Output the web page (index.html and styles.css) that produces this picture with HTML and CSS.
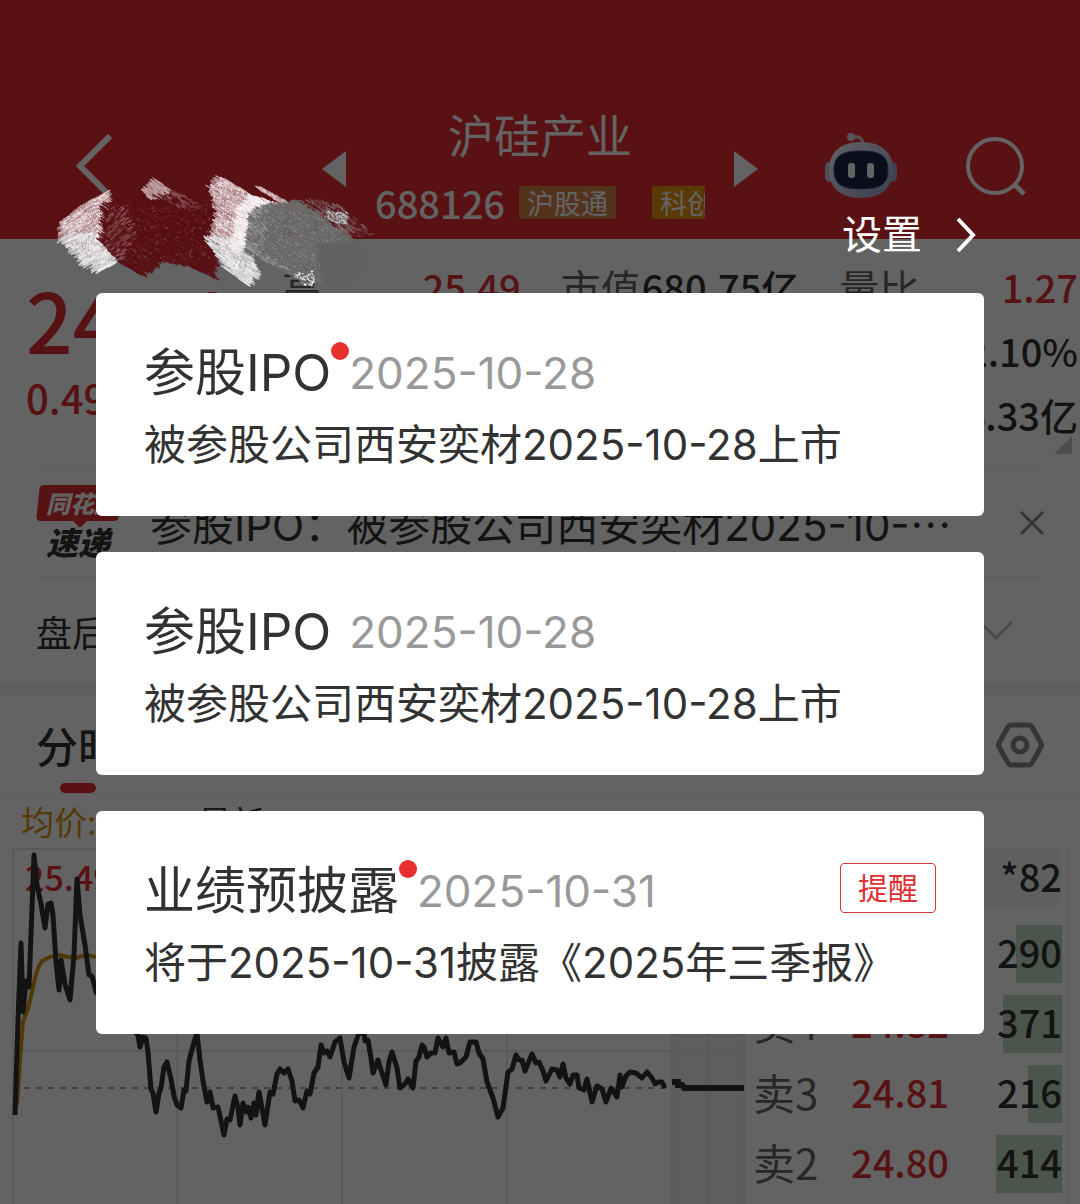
FILE: index.html
```html
<!DOCTYPE html>
<html lang="zh-CN">
<head>
    <meta charset="UTF-8">
    <meta name="viewport" content="width=device-width, initial-scale=1.0">
    <title>沪硅产业 688126</title>
    <link rel="stylesheet" href="styles.css">
</head>
<body>
    <div class="app">
        <header class="header">
            <div class="header-left">
                <button class="icon-btn" aria-label="返回">
                    <svg width="36" height="64" viewBox="0 0 36 64" fill="none" stroke="#fff" stroke-width="6"><path d="M34 2 4 32l30 30"/></svg>
                </button>
            </div>
            <div class="switcher">
                <button class="icon-btn" aria-label="上一只">
                    <svg width="24" height="36" viewBox="0 0 24 36"><path d="M24 0v36L0 18z" fill="#fff"/></svg>
                </button>
                <div class="stock">
                    <h1 class="stock-name">沪硅产业</h1>
                    <div class="stock-info">
                        <span class="stock-code">688126</span>
                        <span class="tag">沪股通</span>
                        <span class="tag tag-gold">科创板</span>
                    </div>
                </div>
                <button class="icon-btn" aria-label="下一只">
                    <svg width="24" height="36" viewBox="0 0 24 36"><path d="M0 0v36l24-18z" fill="#fff"/></svg>
                </button>
            </div>
            <div class="header-right">
                <button class="icon-btn" aria-label="智能助手">
                    <svg width="72" height="68" viewBox="0 0 72 68">
                        <defs>
                            <linearGradient id="head" x1="0" y1="0" x2="1" y2="1">
                                <stop offset="0" stop-color="#ffffff"/>
                                <stop offset="1" stop-color="#9a9fd0"/>
                            </linearGradient>
                        </defs>
                        <path d="M27 5c7-1 11 1 11 8" fill="none" stroke="#d8d4ea" stroke-width="3"/>
                        <circle cx="26" cy="5" r="4" fill="#d8d4ea"/>
                        <rect x="0" y="30" width="10" height="20" rx="5" fill="#c4c6e2"/>
                        <rect x="62" y="30" width="10" height="20" rx="5" fill="#a4a8d4"/>
                        <path d="M36 10c22 0 32 12 32 27 0 17-9 29-32 29S4 54 4 37c0-15 10-27 32-27z" fill="url(#head)"/>
                        <path d="M36 19c18 0 27 4 27 19s-9 19-27 19S9 53 9 38s9-19 27-19z" fill="#1b2445" stroke="#4a4c9c" stroke-width="1"/>
                        <rect x="23" y="31" width="7" height="15" rx="3" fill="#fff"/>
                        <rect x="42" y="31" width="7" height="15" rx="3" fill="#fff"/>
                    </svg>
                </button>
                <button class="icon-btn" aria-label="搜索">
                    <svg width="60" height="60" viewBox="0 0 60 60" fill="none" stroke="#fff" stroke-width="4"><circle cx="29" cy="30" r="27"/><path d="m48 48 10 10" stroke-width="5"/></svg>
                </button>
            </div>
        </header>

        <section class="quote">
            <div class="price">
                <div class="price-now">24.79</div>
                <div class="price-diff">0.49</div>
            </div>
            <div class="quote-col">
                <div class="quote-item"><span class="label">高</span><span class="num up">25.49</span></div>
            </div>
            <div class="quote-col">
                <div class="quote-item"><span class="label">市值</span><span class="num">680.75亿</span></div>
            </div>
            <div class="quote-col">
                <div class="quote-item"><span class="label">量比</span><span class="num up">1.27</span></div>
                <div class="quote-item"><span class="label">换手</span><span class="num">2.10%</span></div>
                <div class="quote-item"><span class="label">金额</span><span class="num">14.33亿</span></div>
            </div>
            <i class="corner"></i>
        </section>

        <section class="news">
            <div class="news-logo">
                <span class="logo-top">同花顺</span>
                <span class="logo-bottom">速递</span>
            </div>
            <p class="news-text">参股IPO：被参股公司西安奕材2025-10-<span class="dots">…</span></p>
            <button class="icon-btn" aria-label="关闭">
                <svg width="24" height="24" viewBox="0 0 24 24" stroke="#888" stroke-width="3"><path d="m1 1 22 22M23 1 1 23"/></svg>
            </button>
        </section>

        <section class="after">
            <span>盘后</span>
            <svg width="36" height="20" viewBox="0 0 36 20" fill="none" stroke="#bbb" stroke-width="3"><path d="m2 1 16 16L34 1"/></svg>
        </section>

        <nav class="tabs">
            <a class="tab active" href="#fenshi">分时</a>
            <button class="icon-btn" aria-label="图表设置">
                <svg width="48" height="46" viewBox="0 0 48 46" fill="none" stroke="#888" stroke-width="5"><path d="M15 3h18q2 0 3 2l9 16q1 2 0 4l-9 16q-1 2-3 2H15q-2 0-3-2L3 25q-1-2 0-4l9-16q1-2 3-2z"/><circle cx="24" cy="23" r="7"/></svg>
            </button>
        </nav>

        <div class="legend">
            <span class="legend-avg">均价:</span>
            <span>最新</span>
        </div>

        <section class="bottom" id="fenshi">
            <div class="chart">
                <svg width="733" height="400" viewBox="12 848 733 400" fill="none">
                    <rect x="671" y="848" width="74" height="400" fill="#f2f2f2"/>
                    <path d="M12 849h733M13 848v400M12 1051h733M177 848v400M342 848v400M507 848v400M672 848v400M708 848v400M744 848v400" stroke="#e8e8e8" stroke-width="2"/>
                    <path d="M12 1088h654" stroke="#c4a07c" stroke-width="2" stroke-dasharray="6 6"/>
                    <text class="chart-max" x="25" y="891">25.49</text>
                    <!-- 均价线 -->
                    <path d="M17 1105 20 1060 23 1022 28 1008 32 992 35 978 38 968 42 961 50 957 60 955 68 957 76 958 86 955 96 957" stroke="#ce9412" stroke-width="4" stroke-linejoin="round"/>
                    <!-- 分时线 -->
                    <polyline class="line" points="15,1115 18,1020 21,943 23,1012 26,981 29,987 34,855 37,885 41,904 45,928 48,904 51,903 53,915 56,962 59,990 61,960 65,984 70,1000 74,955 77,879 80,915 85,945 89,975 92,976 96,992 110,1010 125,1020 138,1035 140,1047 143,1037 146,1038 148,1052 151,1089 153,1093 156,1112 159,1093 161,1088 164,1067 167,1062 171,1079 174,1096 177,1105 181,1108 184,1090 186,1091 189,1061 194,1042 197,1033 200,1060 203,1081 207,1102 210,1092 213,1108 218,1107 224,1135 227,1119 230,1120 235,1096 238,1108 240,1125 243,1103 246,1112 248,1107 251,1118 254,1103 256,1115 259,1092 265,1125 270,1092 273,1094 277,1074 280,1069 284,1073 288,1069 292,1081 295,1101 299,1100 303,1108 307,1091 310,1094 314,1073 318,1067 321,1045 324,1053 327,1051 330,1057 335,1042 340,1038 344,1062 349,1078 354,1047 359,1033 364,1033 365,1041 368,1040 371,1058 373,1073 378,1060 381,1070 386,1085 389,1062 392,1052 397,1068 400,1088 405,1084 408,1079 413,1088 416,1061 419,1057 422,1045 424,1047 427,1057 431,1053 435,1053 438,1038 443,1047 446,1038 449,1053 454,1052 457,1064 460,1063 466,1057 470,1042 476,1042 479,1053 483,1059 487,1082 493,1098 498,1117 503,1108 508,1072 512,1069 516,1055 519,1060 522,1060 525,1071 532,1054 536,1063 539,1062 543,1071 546,1081 552,1069 557,1070 560,1077 563,1064 566,1078 570,1084 573,1075 577,1075 579,1088 584,1090 587,1079 592,1102 597,1086 602,1089 606,1102 611,1088 617,1097 620,1075 622,1087 626,1076 630,1072 636,1073 642,1078 647,1072 652,1078 655,1084 658,1082 662,1082 665,1088"/>
                    <path d="M672 1082h6v3h4l2 3h60" stroke="#333" stroke-width="6"/>
                </svg>
            </div>
            <div class="book">
                <div class="book-top">*82</div>
                <table class="orders">
                    <tr><th>卖5</th><td class="up">24.83</td><td class="qty"><i style="width: 46px"></i><span>290</span></td></tr>
                    <tr><th>卖4</th><td class="up">24.82</td><td class="qty"><i style="width: 59px"></i><span>371</span></td></tr>
                    <tr><th>卖3</th><td class="up">24.81</td><td class="qty"><i style="width: 34px"></i><span>216</span></td></tr>
                    <tr><th>卖2</th><td class="up">24.80</td><td class="qty"><i style="width: 66px"></i><span>414</span></td></tr>
                </table>
            </div>
        </section>
    </div>

    <!-- 弹层 -->
    <div class="mask">
        <button class="setting">
            <span>设置</span>
            <svg width="20" height="36" viewBox="0 0 20 36" fill="none" stroke="#fff" stroke-width="4"><path d="m2 2 15 16L2 34"/></svg>
        </button>
        <article class="card">
            <div class="card-head">
                <h2 class="card-title unread">参股IPO</h2>
                <time class="card-date">2025-10-28</time>
            </div>
            <p class="card-text">被参股公司西安奕材2025-10-28上市</p>
        </article>
        <article class="card">
            <div class="card-head">
                <h2 class="card-title">参股IPO</h2>
                <time class="card-date">2025-10-28</time>
            </div>
            <p class="card-text">被参股公司西安奕材2025-10-28上市</p>
        </article>
        <article class="card">
            <div class="card-head">
                <h2 class="card-title unread">业绩预披露</h2>
                <time class="card-date">2025-10-31</time>
                <button class="remind">提醒</button>
            </div>
            <p class="card-text">将于2025-10-31披露《2025年三季报》</p>
        </article>
    </div>

    <canvas class="scribble" id="scribble" width="340" height="140"></canvas>
    <script src="scribble.js"></script>
</body>
</html>
```

FILE: styles.css
```css
* {
    box-sizing: border-box;
}

body {
    margin: 0;
    position: relative;
    font-family: Inter, "Noto Sans CJK SC", sans-serif;
    color: #323232;
}

h1, h2, p {
    margin: 0;
    font-weight: 400;
}

button {
    padding: 0;
    border: none;
    background: none;
    font-family: inherit;
    cursor: pointer;
}

svg {
    display: block;
}

.app {
    display: flex;
    flex-direction: column;
    height: 100vh;
    overflow: hidden;
    background: #fff;
    font-family: "Noto Sans CJK SC", sans-serif;
}

.up {
    color: #e03034;
}

/* Шапка */
.header {
    flex: none;
    display: grid;
    grid-template-columns: 1fr 436px 1fr;
    align-items: start;
    height: 239px;
    padding-top: 100px;
    background: #e72c33;
    color: #fff;
}

.header-left, .header-right {
    display: flex;
    align-items: center;
    height: 132px;
}

.header-left {
    padding-left: 76px;
}

.header-right {
    justify-content: flex-end;
    gap: 69px;
    padding-right: 54px;
}

.switcher {
    display: flex;
    align-items: center;
    justify-content: space-between;
}

.stock {
    width: 330px;
    overflow: hidden;
}

.stock-name {
    font-size: 46px;
    line-height: 66px;
    text-align: center;
}

.stock-info {
    display: flex;
    align-items: center;
    height: 72px;
    white-space: nowrap;
}

.stock-code {
    font-size: 38px;
    font-weight: 500;
}

.tag {
    flex: none;
    margin-left: 14px;
    padding: 0 8px;
    border-radius: 2px;
    background: #d88448;
    font-size: 27px;
    line-height: 33px;
}

.tag-gold {
    margin-left: 36px;
    background: #e8940c;
}

/* Котировки */
.quote {
    flex: none;
    position: relative;
    display: grid;
    grid-template-columns: 216px repeat(3, minmax(0, 1fr));
    gap: 40px;
    padding: 16px 2px 21px 26px;
}

.price {
    padding-top: 22px;
    color: #e03034;
    font-weight: 500;
}

.price-now {
    font-size: 82px;
    line-height: 84px;
}

.price-diff {
    font-size: 40px;
    line-height: 72px;
}

.quote-item {
    display: flex;
    justify-content: space-between;
    font-size: 40px;
    line-height: 64px;
    white-space: nowrap;
}

.label {
    color: #666;
}

.num {
    font-size: 38px;
    font-weight: 500;
}

.corner {
    position: absolute;
    right: 8px;
    bottom: 14px;
    border-left: 18px solid transparent;
    border-bottom: 18px solid #ccc;
}

/* Новости */
.news {
    flex: none;
    display: flex;
    align-items: center;
    height: 108px;
    margin: 0 36px;
    border-top: 1px solid #ededed;
}

.news-logo {
    width: 84px;
    font-weight: 900;
    font-style: italic;
    white-space: nowrap;
}

.logo-top {
    display: block;
    position: relative;
    z-index: 0;
    padding-left: 10px;
    color: #fff;
    font-size: 24px;
    line-height: 36px;
}

.logo-top::before {
    content: "";
    position: absolute;
    inset: 0 0 0 2px;
    z-index: -1;
    border-radius: 4px;
    background: #e03034;
    transform: skewX(-6deg);
}

.logo-top::after {
    content: "";
    position: absolute;
    top: 100%;
    left: 37px;
    border: 7px solid transparent;
    border-top-color: #e03034;
}

.logo-bottom {
    display: block;
    padding-left: 10px;
    font-size: 32px;
    line-height: 40px;
}

.news-text {
    flex: 1;
    padding-left: 30px;
    font-family: Inter, "Noto Sans CJK SC", sans-serif;
    font-size: 42px;
    white-space: nowrap;
}

.dots {
    font-family: "Noto Sans CJK SC", sans-serif;
}

.after {
    flex: none;
    display: flex;
    align-items: center;
    justify-content: space-between;
    height: 108px;
    margin: 0 36px;
    padding-right: 30px;
    border-top: 1px solid #ededed;
    font-size: 36px;
}

/* Вкладки */
.tabs {
    flex: none;
    display: flex;
    align-items: center;
    justify-content: space-between;
    height: 110px;
    padding: 0 36px;
    border-top: 12px solid #f2f2f2;
    border-bottom: 1px solid #ededed;
}

.tab {
    position: relative;
    color: #323232;
    font-size: 42px;
    font-weight: 500;
    line-height: 97px;
    text-decoration: none;
}

.tab.active::after {
    content: "";
    position: absolute;
    left: 24px;
    bottom: 0;
    width: 36px;
    height: 10px;
    border-radius: 5px;
    background: #e72c33;
}

.legend {
    flex: none;
    display: flex;
    gap: 102px;
    padding-left: 21px;
    font-size: 33px;
    line-height: 54px;
}

.legend-avg {
    color: #d8940c;
}

/* График и стакан */
.bottom {
    flex: 1;
    display: flex;
    min-height: 0;
    padding: 0 12px;
}

.chart {
    flex: 1;
    min-width: 0;
    overflow: hidden;
}

.chart-max {
    fill: #e03034;
    font-size: 34px;
    font-weight: 500;
}

.line {
    stroke: #333;
    stroke-width: 5;
    stroke-linejoin: round;
}

.book {
    width: 323px;
    padding: 0 5px 0 8px;
    border-top: 1px solid #ededed;
    border-right: 1px solid #ededed;
    font-size: 38px;
    font-weight: 500;
}

.book-top {
    margin-bottom: 12px;
    padding-bottom: 4px;
    border-radius: 12px;
    background: #f2f7f5;
    line-height: 54px;
    text-align: right;
}

.orders {
    width: 100%;
    border-collapse: collapse;
}

.orders tr {
    height: 70px;
}

.orders th {
    width: 98px;
    padding: 0 0 4px;
    color: #666;
    font-size: 42px;
    font-weight: 400;
    line-height: 58px;
    text-align: left;
}

.orders td {
    padding: 0 0 4px;
    line-height: 58px;
}

.orders .qty {
    position: relative;
    text-align: right;
}

.qty i {
    position: absolute;
    top: 6px;
    right: 0;
    height: 58px;
    background: #c0dcc2;
}

.qty span {
    position: relative;
}

/* Затемнение с карточками */
.mask {
    position: absolute;
    inset: 0;
    display: flex;
    flex-direction: column;
    gap: 36px;
    padding: 205px 96px 0;
    background: rgba(0, 0, 0, 0.61);
}

.setting {
    display: flex;
    align-items: center;
    align-self: flex-end;
    gap: 34px;
    height: 60px;
    margin: 0 8px -8px 0;
    color: #fff;
    font-size: 40px;
}

.setting span {
    padding-bottom: 6px;
}

.card {
    padding: 44px 48px 35px;
    border-radius: 6px;
    background: #fff;
}

.card-head {
    display: flex;
    align-items: center;
    gap: 18px;
    height: 72px;
}

.card-title {
    position: relative;
    font-size: 51px;
    line-height: 72px;
}

.unread::after {
    content: "";
    position: absolute;
    top: 5px;
    left: 100%;
    width: 18px;
    height: 18px;
    border-radius: 50%;
    background: #e93030;
}

.card-date {
    color: #999;
    font-size: 44px;
}

.card-text {
    font-size: 42px;
    line-height: 72px;
}

.remind {
    width: 96px;
    height: 50px;
    margin: 0 0 6px auto;
    border: 1px solid #d03a3c;
    border-radius: 4px;
    color: #e03034;
    font-size: 30px;
    line-height: 44px;
}

.scribble {
    position: absolute;
    top: 165px;
    left: 45px;
    pointer-events: none;
}
```

FILE: scribble.js
```js
const canvas = document.getElementById('scribble');
const ctx = canvas.getContext('2d');
ctx.translate(-45, -165);

let seed = 7;
function rand() {
    seed = (seed * 16807) % 2147483647;
    return seed / 2147483647;
}

// Штрихи внутри многоугольника: точки, цвета, угол, длина, количество
function hatch(points, colors, angle, length, count) {
    const path = new Path2D('M' + points.join('L') + 'Z');
    const xs = points.map(p => p[0]);
    const ys = points.map(p => p[1]);
    const minX = Math.min(...xs), maxX = Math.max(...xs);
    const minY = Math.min(...ys), maxY = Math.max(...ys);
    const rad = angle * Math.PI / 180;
    for (let n = 0; n < count;) {
        const x = minX + rand() * (maxX - minX);
        const y = minY + rand() * (maxY - minY);
        if (!ctx.isPointInPath(path, x - 45, y - 165)) continue;
        n++;
        const half = length * (0.2 + rand()) / 2;
        ctx.strokeStyle = colors[Math.floor(rand() * colors.length)];
        ctx.lineWidth = 0.6 + rand();
        ctx.beginPath();
        ctx.moveTo(x - Math.cos(rad) * half, y - Math.sin(rad) * half);
        ctx.lineTo(x + Math.cos(rad) * half, y + Math.sin(rad) * half);
        ctx.stroke();
    }
}

const pink = ['#c9a9ad', '#d8c0c3', '#b8959a', '#e3d0d3', '#a87d82'];
const white = ['#e0e0e0', '#f0f0f0', '#d0d0d0', '#c0c0c0'];
const red = ['#5a1114', '#5a1114', '#5e161a', '#551013'];
const gray = ['#6a6a6a', '#707070', '#656565', '#736f6f', '#6c6868'];

// Слева
hatch([[62, 222], [80, 206], [106, 192], [109, 212], [107, 240], [62, 240]], pink, -30, 13, 950);
hatch([[62, 236], [104, 236], [108, 252], [116, 263], [98, 272], [84, 262]], white, -30, 13, 520);
hatch([[62, 222], [80, 208], [104, 195], [108, 240], [110, 262], [98, 268], [66, 240]], ['#fff', '#b08a8e', '#eee'], -30, 1, 900);
// Красная середина
hatch([[104, 205], [135, 200], [160, 192], [208, 204], [214, 245], [214, 277], [188, 266], [160, 260], [142, 276], [120, 263], [102, 242]], red, 34, 12, 3500);
hatch([[108, 205], [126, 205], [136, 235], [122, 260], [104, 246]], ['#8b555a', '#6f3034', '#5a1114', '#7c4347'], -35, 5, 360);
hatch([[143, 191], [155, 179], [172, 191], [158, 197], [148, 198]], ['#c9a9ad', '#a87d82', '#b8959a'], 36, 7, 280);
hatch([[150, 195], [175, 190], [206, 208], [180, 208]], ['#8b555a', '#6f3034', '#5a1114'], 34, 5, 150);
hatch([[110, 205], [210, 205], [210, 262], [125, 260]], ['#7c4347', '#6f3034'], 34, 2, 240);
// Светлая полоса
hatch([[210, 188], [222, 177], [258, 199], [248, 222], [238, 242], [212, 240], [218, 215]], pink, 32, 11, 1000);
hatch([[206, 238], [240, 240], [258, 270], [254, 280], [247, 285], [226, 269]], white, 34, 12, 560);
hatch([[211, 188], [222, 179], [258, 200], [238, 242], [252, 280], [228, 262], [212, 240], [218, 215]], ['#fff', '#b08a8e', '#eee'], 34, 1, 900);
hatch([[238, 210], [252, 196], [282, 204], [256, 212], [246, 236], [240, 252], [232, 252]], ['#f4ecee', '#f8f2f3', '#eadfe1'], 34, 8, 550);
hatch([[256, 187], [262, 188], [294, 205], [284, 206]], pink, 36, 6, 130);
// Серое пятно
hatch([[258, 208], [300, 202], [345, 212], [350, 240], [344, 256], [314, 282], [296, 278], [248, 252], [254, 228]], gray, 34, 12, 3200);
hatch([[250, 212], [268, 208], [262, 250], [290, 270], [246, 254]], ['#8c8c8c', '#9c9c9c', '#666', '#777'], 34, 7, 420);
hatch([[300, 202], [316, 199], [340, 206], [374, 234], [350, 237]], ['#7c5a5c', '#6e6464', '#6a3538', '#5a1114'], 36, 6, 420);
hatch([[325, 212], [348, 212], [346, 224], [330, 222]], ['#aaa', '#8e8e8e', '#ccc'], 30, 3, 100);
hatch([[292, 274], [314, 271], [314, 286], [304, 286]], ['#ddd', '#8e8e8e', '#fff', '#636363'], 30, 3, 120);
hatch([[250, 212], [345, 212], [340, 255], [315, 278], [280, 265]], ['#8e8e8e', '#999', '#5c5c5c'], 30, 1, 700);
hatch([[318, 245], [360, 242], [368, 262], [350, 284], [325, 284]], ['#636363'], 34, 10, 900);
```
